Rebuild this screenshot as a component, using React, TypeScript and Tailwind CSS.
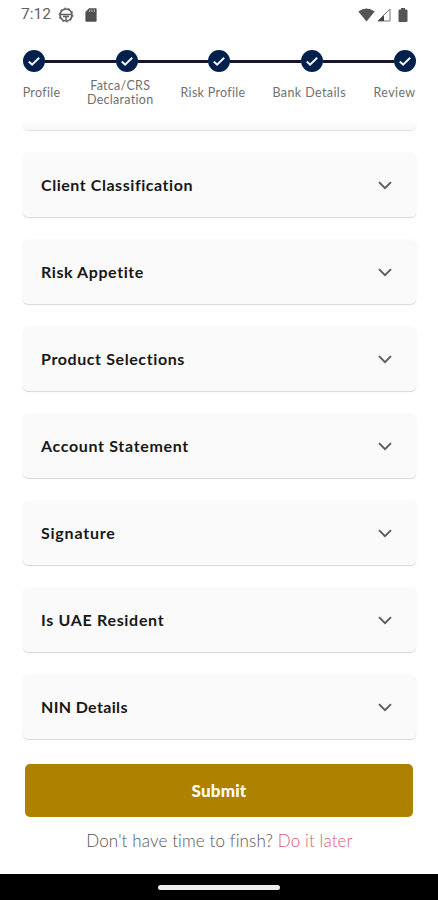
import React from "react";

const steps = [
  { label: "Profile", style: "w-[37px] tracking-[0.3px]" },
  { label: "Fatca/CRS\nDeclaration", style: "w-[67px] tracking-[0.3px]" },
  { label: "Risk Profile", style: "w-[65px] tracking-[0.3px]" },
  { label: "Bank Details", style: "w-[74px] tracking-[0.4px]" },
  { label: "Review", style: "w-[43px] tracking-[0.4px]" },
];

const sections = [
  { title: "Client Classification", style: "tracking-[0.55px]" },
  { title: "Risk Appetite", style: "tracking-[0.58px]" },
  { title: "Product Selections", style: "tracking-[0.6px]" },
  { title: "Account Statement", style: "tracking-[0.66px]" },
  { title: "Signature", style: "tracking-[0.78px]" },
  { title: "Is UAE Resident", style: "tracking-[0.68px]" },
  { title: "NIN Details", style: "tracking-[0.35px]" },
];

function StatusBar() {
  return (
    <header className="flex h-7 items-center pt-px pr-[30px] pl-[21px] text-[#606060]">
      <span className="w-[31px] pt-px font-[Roboto,sans-serif] text-[15.5px] leading-none whitespace-nowrap">7:12</span>
      <svg className="ml-[6px]" width="16" height="16" viewBox="0 0 16 16" fill="none" stroke="currentColor">
        <circle cx="8" cy="8" r="6" strokeWidth="1.700" />
        <circle cx="8" cy="8" r="6.900" strokeWidth="1" strokeDasharray="2 2.330" />
        <path d="M2.500 7.500h11M5 9.500h6M8 9.500v4" strokeWidth="1.500" />
      </svg>
      <svg className="ml-[11px]" width="12" height="14" viewBox="0 0 12 14">
        <path d="M4 .3h6.600q1 0 1 1v11.400q0 1-1 1H1.400q-1 0-1-1V4z" fill="#505050" />
        <path d="M4.700 1.500v2.500M7 1.500v2.500M9.300 1.500v2.500" stroke="#bcbcbc" strokeWidth="1" />
      </svg>
      <div className="ml-auto flex items-center">
        <svg width="17" height="14" viewBox="0 0 17 14">
          <path d="M.3 3.500Q8.500-2.500 16.700 3.500L8.500 13.500z" fill="#555" />
        </svg>
        <svg className="ml-[2px]" width="14" height="14" viewBox="0 0 14 14">
          <path d="M13 1v12H1z" fill="none" stroke="#777" />
          <path d="M7 7V13H1z" fill="#444" />
        </svg>
        <svg className="ml-[7px]" width="10" height="14" viewBox="0 0 10 14">
          <path d="M3 0h4v1.500h1.500q1 0 1 1V13q0 1-1 1h-7q-1 0-1-1V2.500q0-1 1-1H3z" fill="#555" />
        </svg>
      </div>
    </header>
  );
}

function StepDot() {
  return (
    <svg className="shrink-0" width="22" height="22" viewBox="0 0 22 22">
      <circle cx="11" cy="11" r="11" fill="#02204c" />
      <path d="M5.800 11.500l3.300 3.200L16.200 7.800" fill="none" stroke="#f4f5fa" strokeWidth="2" />
    </svg>
  );
}

function Stepper() {
  return (
    <nav className="h-[91px] px-[23px] pt-[22px]">
      <div className="flex w-[392.500px] items-center">
        {steps.map((step, i) => (
          <React.Fragment key={step.label}>
            {i > 0 && <div className="h-[3px] flex-1 bg-[#18142f]" />}
            <StepDot />
          </React.Fragment>
        ))}
      </div>
      <div className="mt-[7px] flex h-7 w-[393px] items-center justify-between text-[12.5px] leading-[14px] text-[#707070]">
        {steps.map((step) => (
          <span key={step.label} className={`flex justify-center text-center whitespace-pre ${step.style}`}>
            {step.label}
          </span>
        ))}
      </div>
    </nav>
  );
}

function Section({ title, style }: { title: string; style: string }) {
  return (
    <button className="flex h-[64px] w-full items-center justify-between rounded-[5px] bg-[#fafafa] pr-[24px] pl-[18px] shadow-[0_1px_1px_rgba(0,0,0,0.14),0_0_3px_rgba(0,0,0,0.04)]">
      <span className={`text-[16px] leading-6 font-bold whitespace-nowrap text-[#181818] ${style}`}>{title}</span>
      <svg width="14" height="9" viewBox="0 0 14 9" fill="none">
        <path d="M1 1.200l6 6 6-6" stroke="#5b5b5b" strokeWidth="1.900" />
      </svg>
    </button>
  );
}

export default function App() {
  return (
    <div className="flex h-[900px] w-[438px] flex-col overflow-hidden bg-white font-[Lato,sans-serif]">
      <StatusBar />
      <Stepper />
      <main className="flex flex-1 flex-col pr-[22px] pl-[23px]">
        <div className="h-[11px] rounded-b-[5px] bg-gradient-to-b from-white to-[#f8f8f8] shadow-[0_1px_1px_rgba(0,0,0,0.12)]" />
        <div className="mt-[23px] flex flex-col gap-[23px]">
          {sections.map((section) => (
            <Section key={section.title} {...section} />
          ))}
        </div>
        <button className="mt-[25px] mr-[3px] ml-[2px] h-[53px] shrink-0 rounded-[5px] bg-[#ad8200] text-[17px] font-black tracking-[0.2px] text-[#fffdf5]">Submit</button>
        <p className="mt-[12px] text-center text-[17px] leading-6 font-light tracking-[0.12px] whitespace-nowrap text-[#555]">
          Don't have time to finsh? <a className="text-[#dc5b73]">Do it later</a>
        </p>
      </main>
      <footer className="flex h-[26px] shrink-0 items-center justify-center bg-black">
        <div className="h-[5px] w-[122px] rounded-full bg-[#eee]" />
      </footer>
    </div>
  );
}
